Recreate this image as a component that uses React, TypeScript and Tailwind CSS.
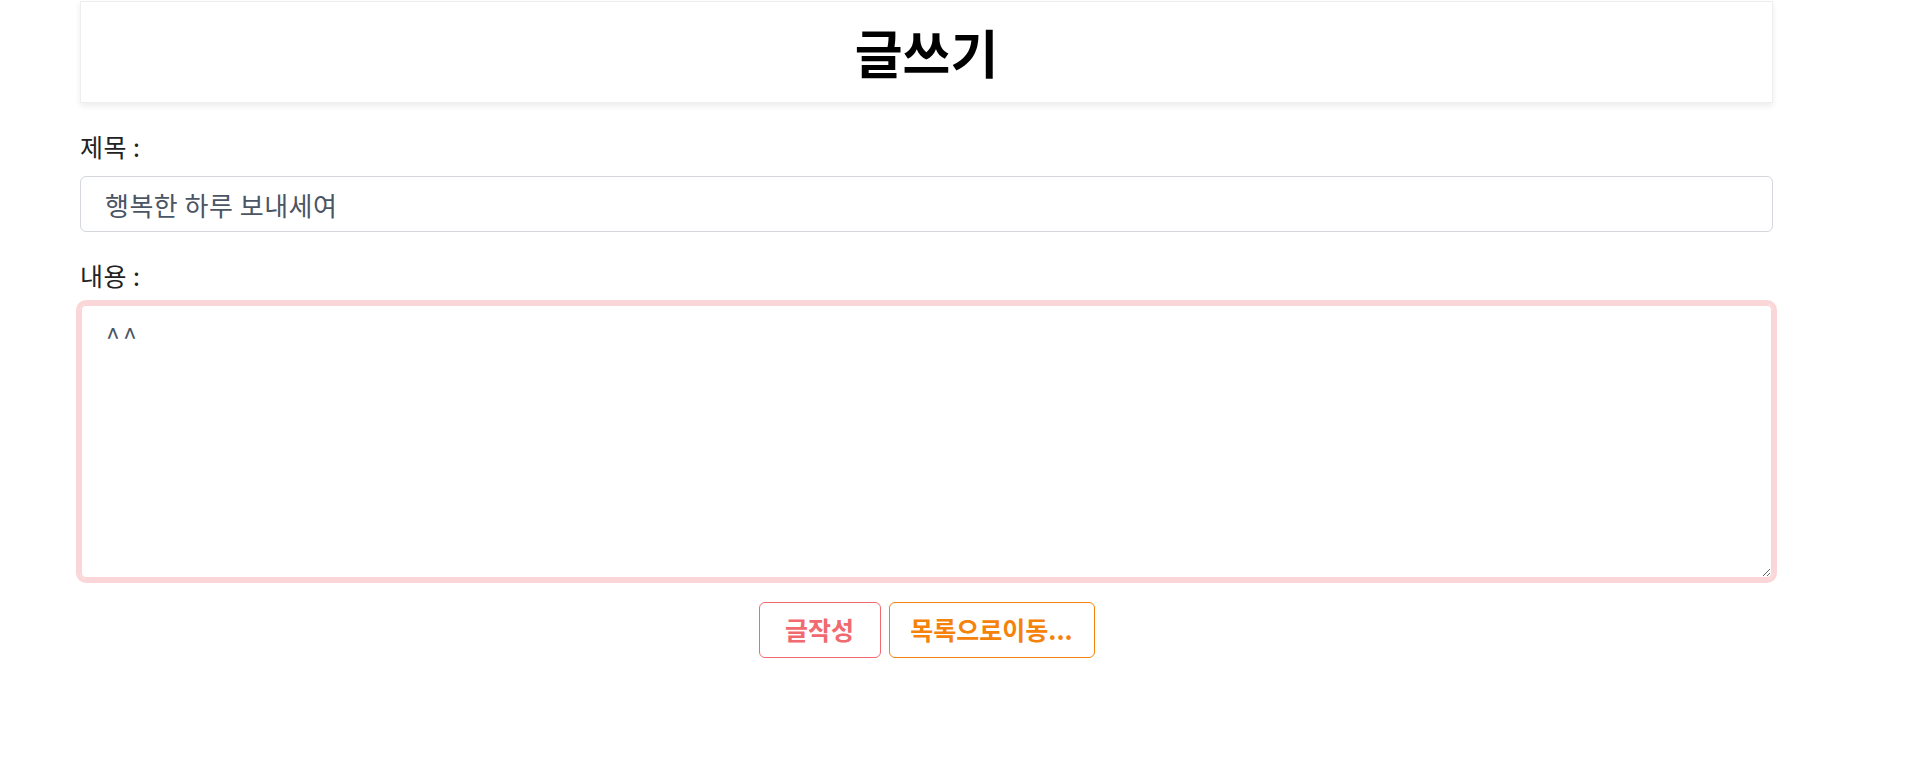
import { useState } from "react";

const App = () => {
  const [title, setTitle] = useState("행복한 하루 보내세여");
  const [content, setContent] = useState("^^");

  return (
    <div className="min-h-screen bg-white font-['Noto_Sans_CJK_KR','Noto_Sans',sans-serif] text-[#222]">
      <div className="ml-[80px] w-[1693px]">
        {/* Header */}
        <header className="mt-px flex h-[102px] items-center justify-center border border-[#eeeeee] bg-white shadow-[0_3px_6px_rgba(0,0,0,0.08)]">
          <h1 className="text-[52px] leading-none font-bold text-black">글쓰기</h1>
        </header>

        {/* Form */}
        <form className="flex flex-col" onSubmit={(e) => e.preventDefault()}>
          <label className="mt-[27px] text-[25px] leading-[32px] tracking-[0.5px]">제목 :</label>
          <input
            value={title}
            onChange={(e) => setTitle(e.target.value)}
            className="mt-[14px] h-[56px] w-full rounded-md border border-[#d4d7dc] px-6 text-[26px] tracking-[0.5px] text-[#4b5563] outline-none"
          />

          <label className="mt-[27px] text-[25px] leading-[32px] tracking-[0.5px]">내용 :</label>
          <textarea
            value={content}
            onChange={(e) => setContent(e.target.value)}
            className="mt-[13px] h-[275px] w-full rounded-md border-2 border-[#fbd6d8] px-6 py-3 text-[25px] tracking-[3px] text-[#4b5563] outline-none ring-4 ring-[#fbd6d8]"
          />

          <div className="mt-[23px] flex justify-center gap-2">
            <button
              type="submit"
              className="h-[56px] w-[122px] rounded-md border border-[#f06a70] text-[25px] font-bold text-[#f06a70]"
            >
              글작성
            </button>
            <button
              type="button"
              className="h-[56px] w-[206px] rounded-md border border-[#f5820a] text-[25px] font-bold text-[#f5820a]"
            >
              목록으로이동...
            </button>
          </div>
        </form>
      </div>
    </div>
  );
};

export default App;
